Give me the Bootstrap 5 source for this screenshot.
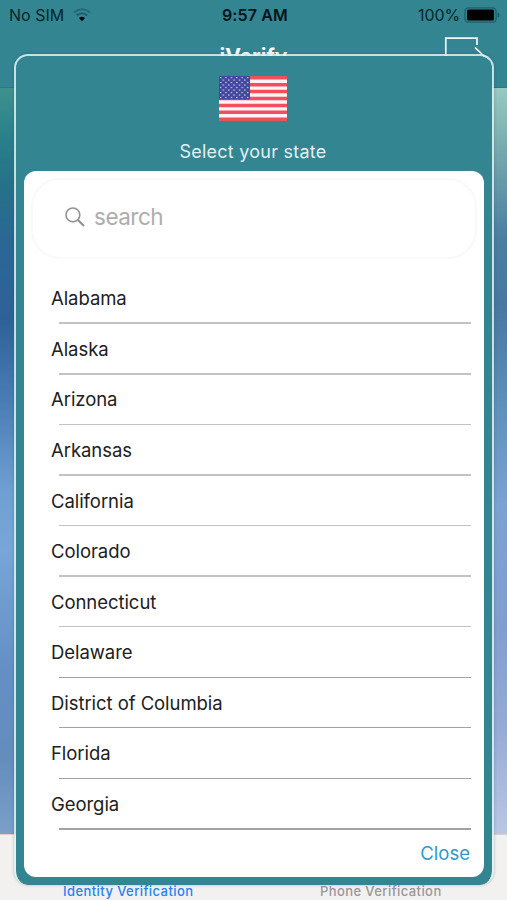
<!DOCTYPE html>
<html lang="en">
<head>
<meta charset="utf-8">
<meta name="viewport" content="width=device-width, initial-scale=1">
<title>iVerify</title>
<link href="https://cdn.jsdelivr.net/npm/bootstrap@5.3.0/dist/css/bootstrap.min.css" rel="stylesheet">
<style>
body{font-family:Inter,"Liberation Sans",sans-serif;background:#338591;width:507px;height:900px}
.app-screen{width:507px;height:900px}
.status-bar{height:30px;font-size:16px;line-height:30px;color:#06262c;padding:0 7px 0 9px}
.status-bar .clock{left:222px;top:0;color:#031519;letter-spacing:.12px}
.status-bar .charge{letter-spacing:-.1px}
.top-bar{height:58px;border-bottom:1px solid #2c7781}
.app-title{font-size:21px;line-height:24px;padding-top:15px}
.exit-icon{left:444px;top:6px}
.side-left{width:40px;background:linear-gradient(#3d918e 0,#27808a 7%,#267189 13%,#2a6795 21%,#2f6199 31%,#4a7db5 42%,#6f9fd2 54%,#78a6d8 62%,#648fc5 78%,#648dbe 90%,#7b9fc8 100%)}
.side-right{width:40px;background:linear-gradient(#97cac1 0,#78abae 8%,#4b7ea1 20%,#4878a0 29%,#5f91bb 43%,#7ba2d2 56%,#819fcf 73%,#96abd5 86%,#b9c7e4 100%)}
.tab-strip{height:66px;background:#f3f0f0;border-top:1px solid #d5d0d3;font-size:13px;line-height:16px;padding-bottom:1px;letter-spacing:.42px}
.tab-strip .tab-on{color:#2583ef;padding-left:2px}
.tab-strip .tab-off{color:#98979a}
.picker{left:14px;top:54px;width:480px;height:831px;background:#338591 padding-box;border:2px solid rgba(226,244,244,.85);border-bottom:0;border-radius:14px;padding:0 8px 8px;box-shadow:0 0 3px rgba(20,50,80,.3)}
.picker-head{height:115px;padding-top:20px}
.picker-head svg{margin-right:2px}
.picker-title{font-size:18px;line-height:24px;color:#e1f1f2;margin-top:19px;letter-spacing:.24px;margin-right:2px}
.sheet{border-radius:12px}
.search-box{height:81px;margin:7px 7px 0;border:2px solid #f9f9f9;border-radius:29px;padding:0 0 3px 32px}
.search-box span{font-size:22.5px;color:#adadad;margin-left:9px;letter-spacing:-.5px}
.states{padding:14.5px 13px 0 27px}
.state-row{height:50.55px;font-size:18.5px;letter-spacing:-.06px;color:#202020;position:relative;padding-top:1px}
.state-row::after{content:"";position:absolute;left:8px;right:0;bottom:0;height:1.6px;background:#c3c3c3}
.state-row:nth-child(n+8)::after{height:1.2px;background:#a2a2a2}
.close-link{font-size:18.5px;line-height:24px;color:#2d9bc9;padding:11px 14px 0 0}
</style>
</head>
<body class="overflow-hidden">
<div class="app-screen position-relative d-flex flex-column overflow-hidden">
  <header class="status-bar d-flex justify-content-between align-items-center position-relative">
    <div class="d-flex align-items-center"><span>No SIM</span>
      <svg class="ms-2" width="20" height="16" viewBox="0 0 20 16" fill="none"><path d="M2 5.5Q10 -1 18 5.5" stroke="#246a74" stroke-width="2"/><path d="M4.7 8.5Q10 4 15.3 8.5" stroke="#205f69" stroke-width="2"/><path d="M7 11Q10 8.5 13 11L10 14.3Z" fill="#000"/></svg></div>
    <div class="clock position-absolute fw-semibold">9:57 AM</div>
    <div class="d-flex align-items-center"><span class="charge">100%</span>
      <svg class="ms-1" width="36" height="16" viewBox="0 0 36 16"><rect x="1" y=".8" width="31" height="14.4" rx="3.5" fill="none" stroke="#1f5f69" stroke-width="1.3"/><rect x="3" y="2.6" width="27" height="10.8" rx="1.5"/><path d="M33.5 5.5Q35.5 6 35.5 8T33.5 10.5Z" fill="#1f5963"/></svg></div>
  </header>
  <nav class="top-bar position-relative text-center text-white flex-shrink-0">
    <div class="app-title fw-bold">iVerify</div>
    <svg class="exit-icon position-absolute" width="45" height="30" viewBox="0 0 45 30" fill="none" stroke="#eef8f8" stroke-width="1.7"><path d="M1.8 27V2.2H33V9"/><path d="M31 11.5L45 25"/></svg>
  </nav>
  <main class="flex-grow-1 d-flex justify-content-between"><div class="side-left"></div><div class="side-right"></div></main>
  <footer class="tab-strip row g-0 align-items-end text-center fw-medium">
    <div class="col tab-on">Identity Verification</div><div class="col tab-off">Phone Verification</div>
  </footer>

  <section class="picker position-absolute d-flex flex-column">
    <div class="picker-head text-center flex-shrink-0 d-flex flex-column align-items-center">
      <svg width="68" height="45" viewBox="0 0 68 45" class="flex-shrink-0">
        <defs><pattern id="stars" width="5.4" height="5" patternUnits="userSpaceOnUse"><circle cx="1.6" cy="1.5" r=".85" fill="#bdbfe4"/><circle cx="4.3" cy="4" r=".85" fill="#bdbfe4"/></pattern></defs>
        <rect width="68" height="45" fill="#fff3f5"/>
        <path d="M0 1.73H68M0 8.65H68M0 15.58H68M0 22.5H68M0 29.42H68M0 36.35H68M0 43.27H68" stroke="#f04f5b" stroke-width="3.46"/>
        <rect width="31" height="23.5" fill="#43469d"/><rect x="1" y="1" width="29" height="21.5" fill="url(#stars)"/>
      </svg>
      <div class="picker-title">Select your state</div>
    </div>
    <div class="sheet bg-white flex-grow-1 d-flex flex-column">
      <div class="search-box d-flex align-items-center flex-shrink-0">
        <svg width="20" height="20" viewBox="0 0 20 20" fill="none" stroke="#929292"><circle cx="7.9" cy="7.9" r="6.9" stroke-width="1.6"/><path d="M13 13L19 19" stroke-width="2.2"/></svg>
        <span>search</span>
      </div>
      <div class="states">
        <div class="state-row d-flex align-items-center">Alabama</div>
        <div class="state-row d-flex align-items-center">Alaska</div>
        <div class="state-row d-flex align-items-center">Arizona</div>
        <div class="state-row d-flex align-items-center">Arkansas</div>
        <div class="state-row d-flex align-items-center">California</div>
        <div class="state-row d-flex align-items-center">Colorado</div>
        <div class="state-row d-flex align-items-center">Connecticut</div>
        <div class="state-row d-flex align-items-center">Delaware</div>
        <div class="state-row d-flex align-items-center">District of Columbia</div>
        <div class="state-row d-flex align-items-center">Florida</div>
        <div class="state-row d-flex align-items-center">Georgia</div>
      </div>
      <div class="close-link text-end">Close</div>
    </div>
  </section>
</div>
<script src="https://cdn.jsdelivr.net/npm/bootstrap@5.3.0/dist/js/bootstrap.bundle.min.js"></script>
</body>
</html>
